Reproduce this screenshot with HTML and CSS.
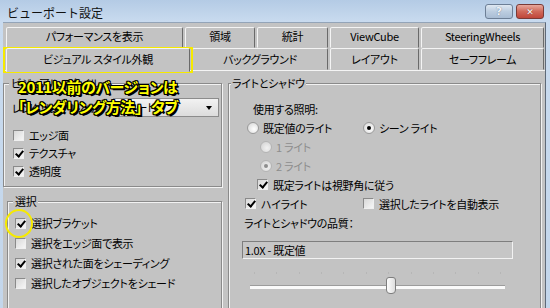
FILE: index.html
```html
<!DOCTYPE html>
<html lang="ja">
<head>
	<meta charset="UTF-8">
	<title>ビューポート設定</title>
	<link rel="stylesheet" href="styles.css">
</head>
<body>
<div class="window">
	<div class="titlebar">
		<span class="title">ビューポート設定</span>
		<span class="tbtn help">?</span>
		<span class="tbtn close">✕</span>
	</div>
	<div class="client">
		<div class="tabrow">
			<div class="tab t1">パフォーマンスを表示</div>
			<div class="tab t2">領域</div>
			<div class="tab t3">統計</div>
			<div class="tab t4">ViewCube</div>
			<div class="tab t5">SteeringWheels</div>
		</div>
		<div class="tabrow front">
			<div class="tab active s1">ビジュアル スタイル外観</div>
			<div class="tab s2">バックグラウンド</div>
			<div class="tab t4">レイアウト</div>
			<div class="tab t5">セーフフレーム</div>
		</div>
		<div class="panel">
			<div class="col-left">
				<div class="group g-style">
					<span class="legend">ビジュアル スタイル</span>
					<div class="row">
						<span>レンダリング レベル:</span>
						<span class="combo">シェード<i class="arrow"></i></span>
					</div>
					<div class="row first"><span class="cb"></span>エッジ面</div>
					<div class="row"><span class="cb on"></span>テクスチャ</div>
					<div class="row"><span class="cb on"></span>透明度</div>
				</div>
				<div class="group g-sel">
					<span class="legend">選択</span>
					<div class="row"><span class="cb on"></span>選択ブラケット</div>
					<div class="row"><span class="cb"></span>選択をエッジ面で表示</div>
					<div class="row"><span class="cb on"></span>選択された面をシェーディング</div>
					<div class="row"><span class="cb"></span>選択したオブジェクトをシェード</div>
				</div>
			</div>
			<div class="group g-light">
				<span class="legend">ライトとシャドウ</span>
				<div class="row in-24">使用する照明:</div>
				<div class="row in-18">
					<span class="opt"><span class="rb"></span>既定値のライト</span>
					<span><span class="rb on"></span>シーン ライト</span>
				</div>
				<div class="row in-31 off"><span class="rb"></span>1 ライト</div>
				<div class="row in-31 off"><span class="rb on"></span>2 ライト</div>
				<div class="row in-28"><span class="cb on"></span>既定ライトは視野角に従う</div>
				<div class="row in-16">
					<span class="opt opt-cb"><span class="cb on"></span>ハイライト</span>
					<span><span class="cb"></span>選択したライトを自動表示</span>
				</div>
				<div class="row in-15">ライトとシャドウの品質：</div>
				<div class="field">1.0X - 既定値</div>
				<div class="slider">
					<div class="ticks">
						<i></i><i></i><i></i><i></i><i></i><i></i><i></i><i></i><i></i><i></i><i></i><i></i>
					</div>
					<div class="track"></div>
					<span class="thumb"></span>
				</div>
				<div class="row in-8"><span class="cb"></span></div>
			</div>
		</div>
	</div>
	<div class="note">2011以前のバージョンは<br>「レンダリング方法」<span class="tail">タブ</span></div>
	<div class="mark-tab"></div>
	<div class="mark-check"></div>
</div>
</body>
</html>
```

FILE: styles.css
```css
html, body {
	margin: 0;
	padding: 0;
}
body {
	width: 550px;
	height: 308px;
	overflow: hidden;
	font-family: "Noto Sans CJK JP", sans-serif;
	font-size: 11px;
	font-feature-settings: "palt";
	letter-spacing: -0.3px;
	color: #000;
	background: #c6d8ec;
}
.window {
	position: relative;
	width: 550px;
	height: 308px;
	overflow: hidden;
	background: linear-gradient(#b4cbe5, #c9dbef 22px, #c3d6eb);
}
.titlebar {
	height: 22px;
	display: flex;
	align-items: center;
	padding: 0 6px 0 7px;
	box-sizing: border-box;
}
.title {
	flex: 1;
	font-size: 12px;
	font-feature-settings: "palt" 0;
	letter-spacing: 0;
	color: #111;
	margin-top: 2px;
}
.tbtn {
	box-sizing: border-box;
	width: 28px;
	height: 15px;
	margin-top: 1px;
	border: 1px solid #6d7f96;
	border-radius: 3px;
	display: flex;
	align-items: center;
	justify-content: center;
	font-family: "DejaVu Sans", sans-serif;
	font-weight: bold;
	letter-spacing: 0;
	color: #fff;
}
.help {
	margin-right: 3px;
	font-size: 11px;
	color: #eef3f8;
	text-shadow: 0 0 1px #53647a;
	background: linear-gradient(#dfe8f2, #bccde0 50%, #a9bdd4);
}
.close {
	font-size: 9px;
	border-color: #7a3a36;
	background: linear-gradient(#e8a89c, #d0695a 50%, #c0463a);
	text-shadow: 0 0 1px #5a1a14;
}
.client {
	margin: 0 4px 0 3px;
	height: 286px;
	padding-top: 4px;
	box-sizing: border-box;
	background: #c3c3c3;
	border-top: 1px solid #93a4b8;
	border-right: 1px solid #5f6a78;
}
.tabrow {
	display: flex;
	gap: 2px;
	padding-left: 3px;
	height: 21px;
	align-items: flex-start;
}
.tabrow.front {
	height: 22px;
}
.tab {
	box-sizing: border-box;
	height: 21px;
	padding-bottom: 3px;
	border: 1px solid;
	border-color: #f4f4f4 #6a6a6a transparent #f4f4f4;
	border-radius: 2px 2px 0 0;
	background: #c3c3c3;
	display: flex;
	align-items: center;
	justify-content: center;
	white-space: nowrap;
}
.front .tab {
	height: 22px;
	padding-bottom: 0;
}
.front .tab.active {
	position: relative;
	z-index: 1;
	height: 24px;
	padding-bottom: 2px;
}
.t1 { width: 177px; }
.t2 { width: 70px; }
.t3 { width: 71px; }
.t4 { width: 89px; }
.t5 { width: 123px; }
.s1 { width: 184px; }
.s2 { width: 136px; }
.panel {
	display: flex;
	border-top: 1px solid #f4f4f4;
	padding-top: 12px;
	height: 300px;
}
.col-left {
	width: 219px;
	flex: none;
}
.group {
	position: relative;
	box-sizing: border-box;
	border: 1px solid #8a8a8a;
	box-shadow: inset 1px 1px 0 #f2f2f2, 1px 1px 0 #f2f2f2;
}
.legend {
	position: absolute;
	top: -8px;
	left: 5px;
	padding: 0 2px;
	line-height: 14px;
	background: #c3c3c3;
}
.row {
	display: flex;
	align-items: center;
	height: 19px;
	white-space: nowrap;
}
.g-style {
	height: 104px;
	padding: 14px 2px 0 8px;
}
.g-style .row.first {
	margin-top: 9px;
	padding-left: 1px;
}
.g-style .row {
	height: 18px;
	padding-left: 1px;
}
.g-style .row:first-of-type {
	height: 19px;
	padding-left: 0;
}
.combo {
	position: relative;
	box-sizing: border-box;
	margin-left: auto;
	width: 106px;
	height: 19px;
	padding-left: 4px;
	line-height: 17px;
	border: 1px solid #8c8c8c;
	background: linear-gradient(#f2f2f2, #dcdcdc);
}
.arrow {
	position: absolute;
	right: 6px;
	top: 7px;
	border-style: solid;
	border-width: 4px 3.5px 0 3.5px;
	border-color: #000 transparent transparent transparent;
}
.g-sel {
	margin: 14px 0 0 4px;
	height: 120px;
	padding: 11px 0 0 7px;
}
.g-sel .row {
	height: 20px;
}
.g-light {
	margin-left: 6px;
	width: 313px;
	height: 240px;
	padding-top: 15px;
}
.g-light .legend {
	left: 2px;
	padding: 0 1px;
}
.in-24 { padding-left: 24px; }
.in-18 { padding-left: 18px; }
.in-31 { padding-left: 31px; }
.in-28 { padding-left: 28px; }
.in-16 { padding-left: 16px; }
.in-15 { padding-left: 15px; }
.in-8 { padding-left: 7px; margin-top: 9px; }
.off {
	color: #8d8d8d;
}
.opt {
	display: flex;
	align-items: center;
	width: 116px;
}
.opt-cb {
	width: 118px;
}
.row > span:not(.cb):not(.rb):not(.combo) {
	display: flex;
	align-items: center;
}
.cb {
	position: relative;
	box-sizing: border-box;
	flex: none;
	width: 11px;
	height: 11px;
	margin-right: 5px;
	border: 1px solid;
	border-color: #8a8a8a #f0f0f0 #f0f0f0 #8a8a8a;
	background: linear-gradient(135deg, #d8d8d8, #f6f6f6);
}
.cb.on::after {
	content: "";
	position: absolute;
	left: 2.5px;
	top: 0px;
	width: 3px;
	height: 6px;
	border: solid #000;
	border-width: 0 2px 2px 0;
	transform: rotate(40deg);
}
.rb {
	position: relative;
	box-sizing: border-box;
	flex: none;
	width: 12px;
	height: 12px;
	margin-right: 4px;
	border-radius: 50%;
	border: 1px solid #9a9a9a;
	background: radial-gradient(circle at 60% 60%, #ffffff, #d4d4d4);
}
.rb.on::after {
	content: "";
	position: absolute;
	left: 3px;
	top: 3px;
	width: 4px;
	height: 4px;
	border-radius: 50%;
	background: #000;
}
.off .rb {
	border-color: #b4b4b4;
	background: radial-gradient(circle at 60% 60%, #f2f2f2, #cfcfcf);
}
.off .rb.on::after {
	background: #8d8d8d;
}
.field {
	box-sizing: border-box;
	margin: 9px 0 0 13px;
	width: 271px;
	height: 18px;
	padding-left: 2px;
	line-height: 16px;
	border: 1px solid;
	border-color: #7e7e7e #f2f2f2 #f2f2f2 #7e7e7e;
	background: #c6c6c6;
}
.slider {
	position: relative;
	margin: 13px 0 0 21px;
	width: 255px;
	height: 23px;
}
.ticks {
	display: flex;
	justify-content: space-between;
	padding: 0 4px;
	height: 2px;
	margin-bottom: 11px;
}
.ticks i {
	width: 1px;
	height: 2px;
	background: #b6b6b6;
}
.track {
	box-sizing: border-box;
	height: 4px;
	border-top: 1px solid #9c9c9c;
	background: #fafafa;
}
.thumb {
	position: absolute;
	left: 136px;
	top: 5px;
	box-sizing: border-box;
	width: 10px;
	height: 17px;
	border: 1px solid #7e7e7e;
	border-radius: 3px 3px 4px 4px;
	background: linear-gradient(90deg, #fdfdfd, #dedede);
}
.note {
	position: absolute;
	left: 18px;
	top: 77px;
	font-size: 15px;
	font-weight: bold;
	line-height: 20px;
	letter-spacing: -0.4px;
	color: #ffff00;
	white-space: nowrap;
	text-shadow: -1px -1px 0 #000, 1px -1px 0 #000, -1px 1px 0 #000, 1px 1px 0 #000,
		0 -1px 0 #000, 0 1px 0 #000, -1px 0 0 #000, 1px 0 0 #000, 2px 2px 0 #000;
}
.tail {
	margin-left: 9px;
}
.mark-tab {
	position: absolute;
	left: 3px;
	top: 47px;
	width: 190px;
	height: 26px;
	box-sizing: border-box;
	border: 2px solid #f6ea00;
}
.mark-check {
	position: absolute;
	left: 5px;
	top: 209px;
	width: 28px;
	height: 29px;
	box-sizing: border-box;
	border: 2px solid #f6ea00;
	border-radius: 50%;
}
```
